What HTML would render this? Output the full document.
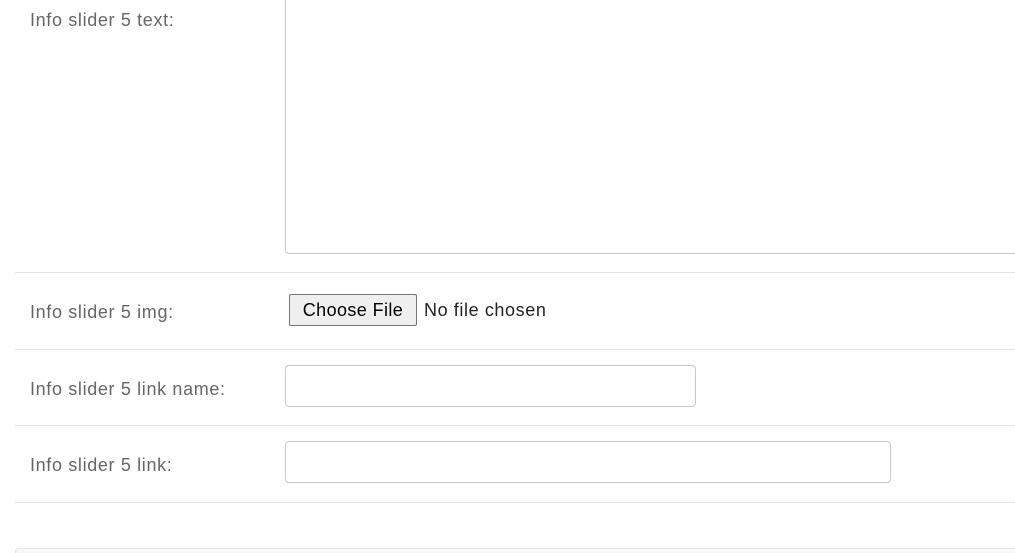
<!DOCTYPE html>
<html><head><style>
html,body{margin:0;width:1015px;height:553px;overflow:hidden;background:#fff;font-family:"Liberation Sans",sans-serif;position:relative}
.l{position:absolute;left:30px;font-size:18px;letter-spacing:0.65px;color:#666;line-height:20px}
.hr{position:absolute;left:15px;right:0;height:1px;background:#e3e3e3}
.box{position:absolute;border:1px solid #c8c8c8;border-radius:4px;background:#fff;box-sizing:border-box}
</style></head><body>
<div class="l" style="top:10px">Info slider 5 text:</div>
<div class="box" style="left:285px;top:-10px;width:740px;height:264px"></div>
<div class="hr" style="top:272px"></div>
<div class="l" style="top:302px">Info slider 5 img:</div>
<div style="position:absolute;left:289px;top:294px;width:128px;height:32px;box-sizing:border-box;border:1px solid #767676;border-radius:2px;background:#efefef;font-size:18px;letter-spacing:0.4px;color:#000;text-align:center;line-height:30px;white-space:nowrap">Choose File</div>
<div style="position:absolute;left:424px;top:299px;font-size:18px;letter-spacing:0.6px;color:#222;line-height:22px">No file chosen</div>
<div class="hr" style="top:349px"></div>
<div class="l" style="top:379px">Info slider 5 link name:</div>
<div class="box" style="left:285px;top:365px;width:411px;height:42px"></div>
<div class="hr" style="top:425px"></div>
<div class="l" style="top:455px">Info slider 5 link:</div>
<div class="box" style="left:285px;top:441px;width:606px;height:42px"></div>
<div class="hr" style="top:502px"></div>
<div style="position:absolute;left:15px;top:548px;width:1010px;height:20px;background:#f7f7f7;border:1px solid #e3e3e3;border-radius:4px"></div>
</body></html>
